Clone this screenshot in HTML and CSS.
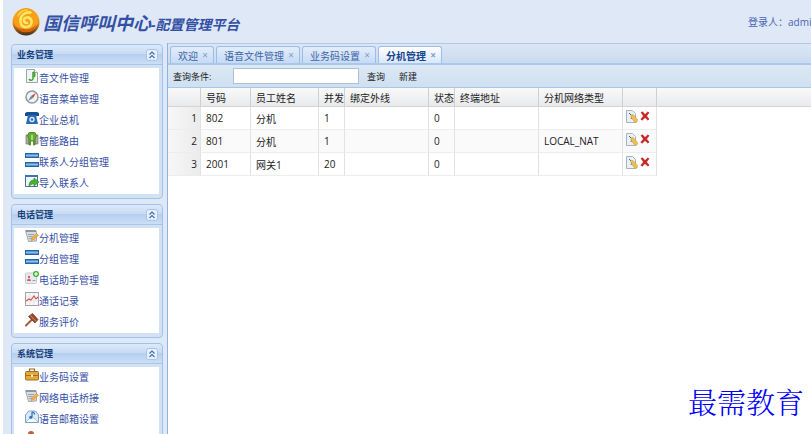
FILE: index.html
```html
<!DOCTYPE html>
<html lang="zh-CN">
<head>
    <meta charset="UTF-8">
    <meta name="viewport" content="width=device-width, initial-scale=1.0">
    <title>国信呼叫中心-配置管理平台</title>
    <link rel="stylesheet" href="styles.css">
</head>
<body>
    <!-- 重复使用的图标 -->
    <svg class="defs" width="0" height="0">
        <defs>
            <linearGradient id="gold" x1="0" y1="0" x2="0" y2="1">
                <stop offset="0" stop-color="#ffc928"/><stop offset="0.55" stop-color="#f08a10"/><stop offset="1" stop-color="#3c2a1c"/>
            </linearGradient>
            <symbol id="i-up" viewBox="0 0 12 12">
                <rect x="0.5" y="0.5" width="11" height="11" rx="2" fill="#e6f0fc" stroke="#a9c4e8"/>
                <path d="M3.500 5.500 6 3l2.500 2.500M3.500 9 6 6.500 8.500 9" fill="none" stroke="#3f6bad" stroke-width="1.100"/>
            </symbol>
            <symbol id="i-group" viewBox="0 0 14 14">
                <rect x="0.5" y="1" width="13" height="12" fill="#fff"/>
                <path d="M0 0h14v5H0z" fill="#2464ae"/><path d="M1 1.500h12v2H1z" fill="#8fc4ec"/>
                <path d="M0 9h14v5H0z" fill="#2464ae"/><path d="M1 10.500h12v2H1z" fill="#8fc4ec"/>
            </symbol>
            <symbol id="i-note" viewBox="0 0 14 14">
                <path d="M0.500 1.500h10l1 1V12l-8 .5z" fill="#d9dde2" stroke="#a3a9af"/>
                <path d="M1 1h10v2H1z" fill="#8d959d"/><path d="M3 5.500h6M3.500 7.500h4M4 9.500h3" stroke="#8ca5c0"/>
                <path d="m6 11.500 1-3 4.500-4 2 2-4.500 4z" fill="#f2b044" stroke="#c98e3c" stroke-width=".6"/>
            </symbol>
            <symbol id="i-edit" viewBox="0 0 12 13">
                <path d="M0.500 0.500h6l3 3v9h-9z" fill="#e9f0f7" stroke="#a5b4c3"/>
                <path d="m3 3 3 3-1 3" fill="none" stroke="#4d5f75"/>
                <path d="m5 5 2-.5 4.500 5-.5 2.500-2 .5L5 7z" fill="#eec04c" stroke="#c79a3a" stroke-width=".6"/>
            </symbol>
            <symbol id="i-del" viewBox="0 0 10 10">
                <path d="M1 1.500 2.500.8 5 3.500 8 .8l1 1L6.500 5 9 8 8 9.200 5 6.500 2.200 9.200.8 8.200 3.500 5z" fill="#cf2222" stroke="#a31515" stroke-width=".5"/>
            </symbol>
        </defs>
    </svg>

    <div class="page">
        <header class="header">
            <svg class="logo" viewBox="0 0 28 29">
                <ellipse cx="14" cy="15" rx="13.500" ry="13.500" fill="url(#gold)"/>
                <circle cx="14" cy="13" r="12" fill="#f7a019"/>
                <path d="M3.500 18a11 11 0 0 0 21-1c-3 4-7 6-12 5-4 0-7-1-9-4z" fill="#d7620d"/>
                <path d="M18.500 5.500C12 4.500 8 9 8.500 14.500c.3 4 3 6 6 5.500 4-.5 5.500-3 5-6-.5-2.500-2.500-4-5-3.500-2 .3-3 2-2.500 3.500.3 1.500 1.500 2 3 2" fill="none" stroke="#ffe566" stroke-width="2.600" stroke-linecap="round"/>
                <path d="M6 9c2-4 5-6 9-6" fill="none" stroke="#ffd54a" stroke-width="1.500" stroke-linecap="round"/>
            </svg>
            <h1 class="title">国信呼叫中心<small>-配置管理平台</small></h1>
            <div class="userbox">登录人：admin</div>
        </header>

        <div class="content">
            <nav class="sidebar">
                <section class="panel">
                    <div class="panel-head"><h2>业务管理</h2><button class="toggle" type="button" aria-label="折叠"><svg><use href="#i-up"/></svg></button></div>
                    <ul class="menu">
                        <li><svg viewBox="0 0 14 14"><path d="M1.500.5h8l3 3v10h-11z" fill="#f0f4f4" stroke="#9aa8a8"/><path d="M9.500.5v3h3" fill="#fff" stroke="#9aa8a8"/><path d="M8 3v7c-1 2-3 1.500-4 0M8 3c2 1 2.500 3 1 5" fill="none" stroke="#44a32b" stroke-width="1.500"/></svg><a href="#">音文件管理</a></li>
                        <li><svg viewBox="0 0 14 14"><circle cx="7" cy="7" r="6" fill="#edf3f7" stroke="#8f9ba5" stroke-width="1.500"/><path d="m11 3-3 5-2-2z" fill="#d8432c"/><path d="m3 11 3-5 2 2z" fill="#6f87a4"/></svg><a href="#">语音菜单管理</a></li>
                        <li><svg viewBox="0 0 14 14"><path d="M0 5V2l2-1h10l2 1v3h-3V4H3v1z" fill="#164f93"/><path d="M3 4h8l2 9H1z" fill="#2769b3"/><circle cx="7" cy="8.500" r="2.700" fill="#d7e9fa"/><circle cx="7" cy="8.500" r="1.200" fill="#2769b3"/></svg><a href="#">企业总机</a></li>
                        <li><svg viewBox="0 0 14 14"><path d="M1 3h3v9H1zM10 3h3v9h-3z" fill="#a9ada6" stroke="#757a72" stroke-width=".7"/><path d="M4 .5h6l1.500 3L10 7v6H8.500V9h-3v4H4V7L2.500 3.500z" fill="#67ad2c" stroke="#447c1d" stroke-width=".8"/><path d="M6 3h2v5H6z" fill="#aadb72"/></svg><a href="#">智能路由</a></li>
                        <li><svg><use href="#i-group"/></svg><a href="#">联系人分组管理</a></li>
                        <li><svg viewBox="0 0 14 14"><path d="M.5 1.500h12v11H.5z" fill="#f2f6fb" stroke="#456fa8"/><path d="M0 1h13v2H0z" fill="#3e72b7"/><path d="M4 12c0-4 2-6 5-6V4l5 4-5 4v-2c-2 0-3 .5-5 2z" fill="#43b52d" stroke="#278316" stroke-width=".6"/></svg><a href="#">导入联系人</a></li>
                    </ul>
                </section>

                <section class="panel">
                    <div class="panel-head"><h2>电话管理</h2><button class="toggle" type="button" aria-label="折叠"><svg><use href="#i-up"/></svg></button></div>
                    <ul class="menu">
                        <li><svg><use href="#i-note"/></svg><a href="#">分机管理</a></li>
                        <li><svg><use href="#i-group"/></svg><a href="#">分组管理</a></li>
                        <li><svg viewBox="0 0 14 14"><rect x=".5" y="2" width="11" height="10.500" rx="1" fill="#e8eaef" stroke="#c5c9d2"/><circle cx="4" cy="6" r="1.200" fill="#d0606c"/><path d="M2 10c0-3 4-3 4 0z" fill="#d0606c"/><path d="M7.500 9.500h3" stroke="#9ba3b3"/><circle cx="11" cy="3" r="3" fill="#39ae31"/><path d="M11 1v4M9 3h4" stroke="#fff" stroke-width="1.200"/></svg><a href="#">电话助手管理</a></li>
                        <li><svg viewBox="0 0 14 14"><rect x=".5" y=".5" width="13" height="13" fill="#faf6f5" stroke="#a3a3ad"/><path d="M1 5h12M1 9h12M5 1v12M9 1v12" stroke="#dedee4" stroke-width=".7"/><path d="m1 9 3-2 2 1 3-4 2 3 2-2" fill="none" stroke="#cf5454" stroke-width="1.100"/></svg><a href="#">通话记录</a></li>
                        <li><svg viewBox="0 0 14 14"><path d="m1 12.500 6-6" stroke="#a06038" stroke-width="2" stroke-linecap="round"/><path d="m3.500 3.500 4-3L13 6.500l-3 3.500z" fill="#9b4a2c" stroke="#6e2f1a" stroke-width=".7"/><path d="m5.500 2.500 5.500 6" stroke="#cf8a63"/></svg><a href="#">服务评价</a></li>
                    </ul>
                </section>

                <section class="panel">
                    <div class="panel-head"><h2>系统管理</h2><button class="toggle" type="button" aria-label="折叠"><svg><use href="#i-up"/></svg></button></div>
                    <ul class="menu">
                        <li><svg viewBox="0 0 14 14"><path d="M4.500 3.500V1h5v2.500" fill="none" stroke="#8c6420" stroke-width="1.200"/><rect x=".5" y="3.500" width="13" height="8.500" rx="1" fill="#e3a93c" stroke="#a26f1c"/><path d="M1 7.500h12" stroke="#a26f1c"/><rect x="6" y="6.500" width="2" height="2.500" fill="#fff0b4"/></svg><a href="#">业务码设置</a></li>
                        <li><svg><use href="#i-note"/></svg><a href="#">网络电话桥接</a></li>
                        <li><svg viewBox="0 0 14 14"><path d="m.5 5 3-4h7l3 4v7.500H.5z" fill="#dceaf7" stroke="#7fa3c6"/><path d="m1 12 4-4h4l4 4" fill="#f7fbff" stroke="#9ab8d5" stroke-width=".8"/><path d="M7 2v5M7 2c2 0 2.500 1 2.500 2.500" fill="none" stroke="#2c6fc1" stroke-width="1.200"/><circle cx="5.800" cy="7.200" r="1.500" fill="#2c6fc1"/></svg><a href="#">语音邮箱设置</a></li>
                        <li><svg viewBox="0 0 14 14"><circle cx="6" cy="3" r="3" fill="#b9603f"/><path d="M1 14c0-9 10-9 10 0z" fill="#4f7dbb"/></svg></li>
                    </ul>
                </section>
            </nav>

            <main class="main">
                <div class="tabs">
                    <div class="tab"><a href="#">欢迎</a><button type="button" aria-label="关闭">×</button></div>
                    <div class="tab"><a href="#">语音文件管理</a><button type="button" aria-label="关闭">×</button></div>
                    <div class="tab"><a href="#">业务码设置</a><button type="button" aria-label="关闭">×</button></div>
                    <div class="tab active"><a href="#">分机管理</a><button type="button" aria-label="关闭">×</button></div>
                </div>
                <form class="toolbar">
                    <label for="keyword">查询条件:</label>
                    <input type="text" id="keyword" name="keyword">
                    <button type="button">查询</button>
                    <button type="button">新建</button>
                </form>
                <div class="grid">
                    <table>
                        <colgroup>
                            <col class="c-num"><col class="c-code"><col class="c-name"><col class="c-small"><col class="c-wide"><col class="c-small"><col class="c-wide"><col class="c-wide"><col class="c-op"><col>
                        </colgroup>
                        <thead>
                            <tr><th></th><th>号码</th><th>员工姓名</th><th>并发</th><th>绑定外线</th><th>状态</th><th>终端地址</th><th>分机网络类型</th><th></th><th></th></tr>
                        </thead>
                        <tbody>
                            <tr><td>1</td><td>802</td><td>分机</td><td>1</td><td></td><td>0</td><td></td><td></td><td><div class="op"><button type="button" aria-label="编辑"><svg class="edit"><use href="#i-edit"/></svg></button><button type="button" aria-label="删除"><svg class="del"><use href="#i-del"/></svg></button></div></td><td></td></tr>
                            <tr><td>2</td><td>801</td><td>分机</td><td>1</td><td></td><td>0</td><td></td><td>LOCAL_NAT</td><td><div class="op"><button type="button" aria-label="编辑"><svg class="edit"><use href="#i-edit"/></svg></button><button type="button" aria-label="删除"><svg class="del"><use href="#i-del"/></svg></button></div></td><td></td></tr>
                            <tr><td>3</td><td>2001</td><td>网关1</td><td>20</td><td></td><td>0</td><td></td><td></td><td><div class="op"><button type="button" aria-label="编辑"><svg class="edit"><use href="#i-edit"/></svg></button><button type="button" aria-label="删除"><svg class="del"><use href="#i-del"/></svg></button></div></td><td></td></tr>
                        </tbody>
                    </table>
                </div>
            </main>
        </div>
    </div>
    <div class="watermark">最需教育</div>
</body>
</html>
```
FILE: styles.css
```css
*{
    box-sizing: border-box;
}

body{
    margin: 0;
    height: 100vh;
    overflow: hidden;

    font-size: 10px;
    font-family: 'Open Sans', 'Noto Sans CJK SC', sans-serif;
}

a{
    color: inherit;
    text-decoration: none;
}

button{
    padding: 0;
    border: 0;
    background: none;
    color: inherit;
    font: inherit;
}

svg{
    display: block;
}

.defs{
    position: absolute;
}

.page{
    display: flex;
    flex-direction: column;
    height: 100vh;

    border-left: 3px solid #fff;

    background-color: #dfe8f6;
}

/* 顶部 */
.header{
    display: flex;
    align-items: center;
    flex: none;
    height: 43px;
    padding-left: 9px;
    overflow: hidden;

    color: #3450a4;
    white-space: nowrap;
}

.logo{
    flex: none;
    width: 28px;
    height: 29px;
}

.title{
    margin: 4px 0 0 3px;

    font-size: 18px;
    font-style: italic;
    font-weight: bold;
    line-height: 24px;
}

.title small{
    font-size: 14px;
}

.userbox{
    flex: none;
    width: 63px;
    margin-left: auto;

    color: #4a65b5;
}

.content{
    display: flex;
    flex: 1;
    gap: 4px;
    min-height: 0;
}

/* 左侧菜单 */
.sidebar{
    display: flex;
    flex-direction: column;
    flex: none;
    gap: 5px;
    width: 160px;
    padding: 1px 0 0 8px;
    overflow: hidden;
}

.panel{
    flex: none;
    padding: 0 3px 4px 2px;

    border: 1px solid #a3c0e8;
    border-radius: 4px;

    background-color: #d3e1f5;
}

.panel-head{
    display: flex;
    align-items: center;
    justify-content: space-between;
    height: 20px;
    margin: 0 -3px 3px -2px;
    padding: 0 4px 0 5px;

    border-bottom: 1px solid #a9c5ea;
    border-radius: 4px 4px 0 0;

    background: linear-gradient(#dce9f9, #c8dbf3 45%, #b5cfee 50%, #cbdff6);
}

.panel-head h2{
    margin: 0;

    color: #173f7c;

    font-size: 9px;
    font-weight: bold;
}

.toggle svg{
    width: 12px;
    height: 12px;
}

.menu{
    margin: 0;
    padding: 0 0 0 11px;

    background-color: #fff;

    list-style: none;
}

.menu li{
    display: flex;
    height: 21px;

    color: #3650a6;

    line-height: 21px;
}

.menu svg{
    flex: none;
    width: 14px;
    height: 14px;
    margin-top: 1px;
}

/* 主区域 */
.main{
    display: flex;
    flex-direction: column;
    flex: 1;
    min-width: 0;

    border-left: 1px solid #8db2e3;

    background-color: #fff;
}

.tabs{
    display: flex;
    align-items: flex-end;
    flex: none;
    gap: 2px;
    height: 22px;
    padding: 0 2px;

    border-top: 1px solid #b5c8e2;
    border-bottom: 2px solid #a9c8ee;

    background: linear-gradient(#dbe6f5, #cbdaef);
}

.tab{
    display: flex;
    align-items: center;
    gap: 3px;
    height: 17px;
    padding: 0 4px 0 7px;

    border: 1px solid #9dbde6;
    border-bottom: 0;
    border-radius: 3px 3px 0 0;

    background: linear-gradient(#e2edfb, #c6dbf5);

    color: #3f64a4;
    white-space: nowrap;
}

.tab button{
    width: 8px;

    color: #7f9cc6;

    line-height: 10px;
}

.tab.active{
    background: linear-gradient(#fff, #d9e8fa);

    color: #17458f;

    font-weight: bold;
}

.toolbar{
    display: flex;
    align-items: center;
    flex: none;
    height: 23px;
    padding-left: 5px;

    border-bottom: 1px solid #a8c6e6;

    background: linear-gradient(#dce8f5, #cfe0f1);

    color: #222;

    font-size: 9px;
}

.toolbar label{
    width: 60px;
}

.toolbar input{
    width: 126px;
    height: 16px;
    padding: 0 3px;

    border: 1px solid #b0c0d2;

    background-color: #fff;

    font: inherit;
}

.toolbar button{
    margin: 0 6px 0 8px;
}

/* 表格 */
.grid table{
    width: 100%;

    border-collapse: separate;
    border-spacing: 0;
    table-layout: fixed;

    color: #222;
}

.c-num{ width: 33px; }
.c-code{ width: 50px; }
.c-name{ width: 68px; }
.c-small{ width: 26px; }
.c-wide{ width: 84px; }
.c-op{ width: 34px; }

.grid th,
.grid td{
    padding: 0 0 0 5px;

    border-right: 1px solid #e2e2e2;

    font-weight: normal;
    text-align: left;
    white-space: nowrap;
}

.grid th{
    height: 19px;

    border-right-color: #cfcfcf;
    border-bottom: 1px solid #d5d5d5;

    background: linear-gradient(#f9f9f9, #e9eaec);
}

.grid td{
    height: 23px;

    border-bottom: 1px solid #ededed;
}

.grid td:first-child{
    padding: 0 3px 0 0;

    background: linear-gradient(to right, #f7f7f7, #ebebeb);

    text-align: right;
}

.grid tbody tr:nth-child(even){
    background-color: #fafafa;
}

.grid th:last-child,
.grid td:last-child{
    border-right: 0;
}

.grid td:last-child{
    border-bottom: 0;

    background-color: #fff;
}

.op{
    display: flex;
    gap: 2px;
    height: 17px;
    margin-left: -2px;
}

.op button{
    height: 13px;
}

.edit{
    width: 12px;
    height: 13px;
}

.del{
    width: 10px;
    height: 10px;
}

.watermark{
    position: absolute;
    right: 7px;
    bottom: 12px;

    color: #00f;

    font-size: 29px;
    font-family: 'Noto Serif CJK SC', 'Noto Sans CJK SC', sans-serif;
    font-weight: 300;
    line-height: 40px;
}
```
